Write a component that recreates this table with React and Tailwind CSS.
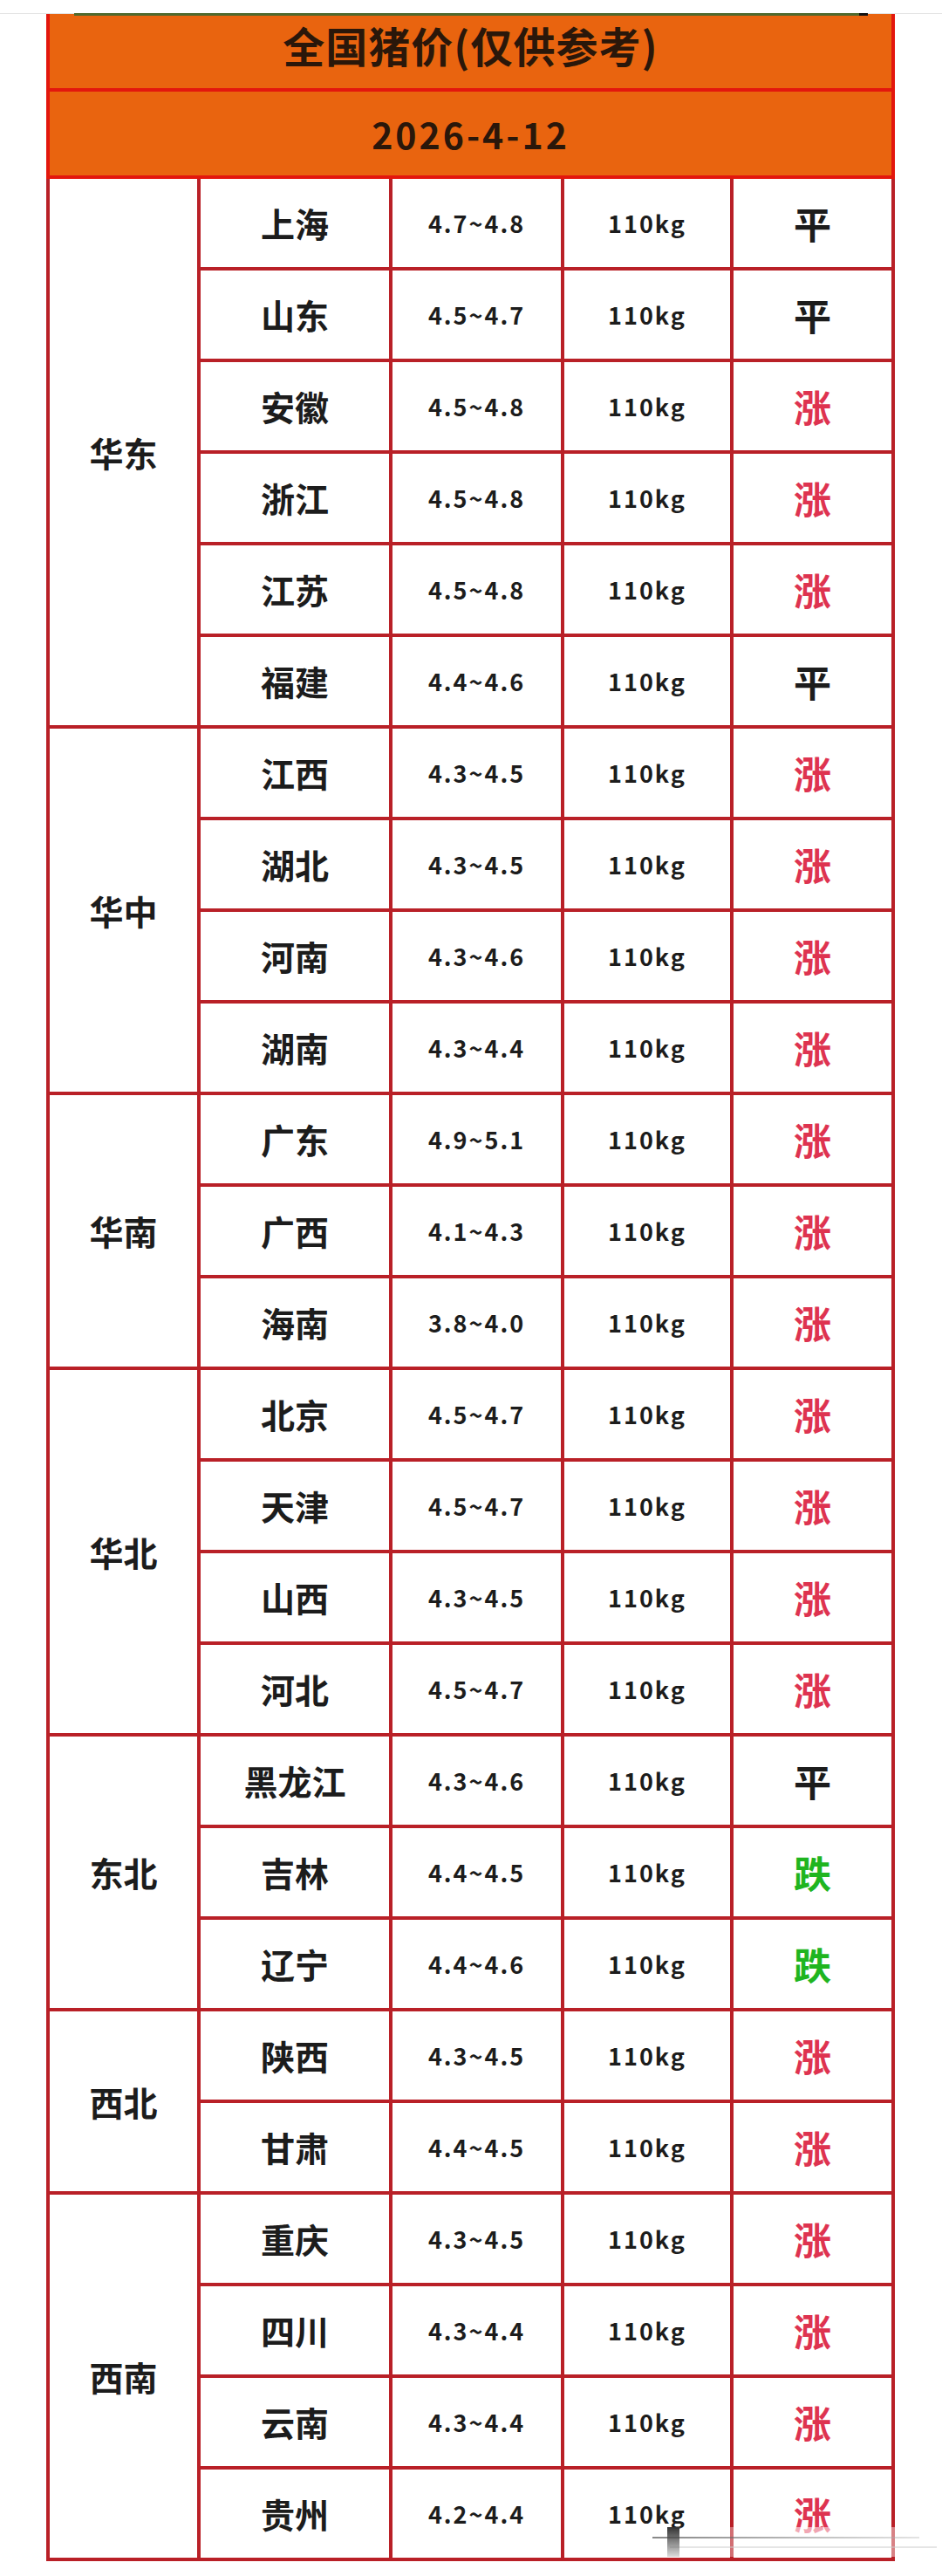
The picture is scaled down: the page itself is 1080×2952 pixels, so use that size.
const GROUPS = [
  {
    region: '华东',
    rows: [
      ['上海', '4.7~4.8', '平'],
      ['山东', '4.5~4.7', '平'],
      ['安徽', '4.5~4.8', '涨'],
      ['浙江', '4.5~4.8', '涨'],
      ['江苏', '4.5~4.8', '涨'],
      ['福建', '4.4~4.6', '平'],
    ],
  },
  {
    region: '华中',
    rows: [
      ['江西', '4.3~4.5', '涨'],
      ['湖北', '4.3~4.5', '涨'],
      ['河南', '4.3~4.6', '涨'],
      ['湖南', '4.3~4.4', '涨'],
    ],
  },
  {
    region: '华南',
    rows: [
      ['广东', '4.9~5.1', '涨'],
      ['广西', '4.1~4.3', '涨'],
      ['海南', '3.8~4.0', '涨'],
    ],
  },
  {
    region: '华北',
    rows: [
      ['北京', '4.5~4.7', '涨'],
      ['天津', '4.5~4.7', '涨'],
      ['山西', '4.3~4.5', '涨'],
      ['河北', '4.5~4.7', '涨'],
    ],
  },
  {
    region: '东北',
    rows: [
      ['黑龙江', '4.3~4.6', '平'],
      ['吉林', '4.4~4.5', '跌'],
      ['辽宁', '4.4~4.6', '跌'],
    ],
  },
  {
    region: '西北',
    rows: [
      ['陕西', '4.3~4.5', '涨'],
      ['甘肃', '4.4~4.5', '涨'],
    ],
  },
  {
    region: '西南',
    rows: [
      ['重庆', '4.3~4.5', '涨'],
      ['四川', '4.3~4.4', '涨'],
      ['云南', '4.3~4.4', '涨'],
      ['贵州', '4.2~4.4', '涨'],
    ],
  },
]

const SPAN = {
  2: 'row-span-2',
  3: 'row-span-3',
  4: 'row-span-4',
  6: 'row-span-6',
}

const TREND_COLOR = {
  平: 'text-[#1c1c1c]',
  涨: 'text-[#de3350]',
  跌: 'text-[#1fb51f]',
}

const cell = 'bg-white flex items-center justify-center'

export default function App() {
  return (
    <div
      className="relative w-[1080px] h-[2952px] bg-white pt-[15px]"
      style={{ fontFamily: '"Noto Sans CJK SC", "Noto Sans", sans-serif' }}
    >
      <div className="absolute left-0 right-0 top-[15px] h-px bg-[#e4e4e4]" />

      <div className="ml-[53px] w-[973px]">
        {/* header */}
        <div className="border-x-4 border-b-4 border-[#e3170d] bg-[#e9640f]">
          <div className="relative h-[90px] flex items-center justify-center border-b-4 border-[#e3170d] pb-[14px]">
            <div className="absolute left-[28px] top-0 w-[910px] h-[3px] bg-[#4f6a2e]">
              <div className="absolute right-0 top-0 w-[10px] h-[3px] bg-[#111]" />
            </div>
            <span className="text-[48px] font-bold leading-none text-[#2a170a] tracking-[1px]">
              全国猪价(仅供参考)
            </span>
          </div>
          <div className="h-[96px] flex items-center justify-center">
            <span className="text-[41px] font-bold leading-none text-[#2a170a] tracking-[3px]">
              2026-4-12
            </span>
          </div>
        </div>

        {/* body */}
        <div className="grid grid-cols-[169px_216px_193px_190px_181px] auto-rows-[101px] gap-[4px] bg-[#b92027] px-[4px] pb-[4px]">
          {GROUPS.map((g) =>
            g.rows.map(([name, price, trend], i) => (
              <div key={name} className="contents">
                {i === 0 && (
                  <div className={`${cell} ${SPAN[g.rows.length]}`}>
                    <span className="text-[39px] font-bold text-[#1c1c1c] leading-none">{g.region}</span>
                  </div>
                )}
                <div className={cell}>
                  <span className="text-[39px] font-bold text-[#1c1c1c] leading-none">{name}</span>
                </div>
                <div className={cell}>
                  <span className="text-[27px] font-bold text-[#1c1c1c] leading-none tracking-[2px]">{price}</span>
                </div>
                <div className={cell}>
                  <span className="text-[27px] font-bold text-[#1c1c1c] leading-none tracking-[2px]">110kg</span>
                </div>
                <div className={cell}>
                  <span className={`text-[43px] font-bold leading-none ${TREND_COLOR[trend]}`}>{trend}</span>
                </div>
              </div>
            ))
          )}
        </div>
      </div>

      {/* watermark smear, bottom right */}
      <div className="absolute left-[748px] top-[2896px] w-[306px] h-[34px]">
        <div className="absolute inset-0 bg-gradient-to-r from-white/0 via-white/60 to-white/40" />
        <div className="absolute left-0 top-[11px] w-full h-[2px] bg-gradient-to-r from-[#555]/70 to-[#bbb]/40" />
        <div className="absolute left-[20px] top-[22px] w-full h-[2px] bg-[#ccc]/50" />
        <div className="absolute left-[17px] top-0 w-[14px] h-[34px] bg-gradient-to-b from-[#333] to-[#aaa]/40" />
      </div>
    </div>
  )
}
